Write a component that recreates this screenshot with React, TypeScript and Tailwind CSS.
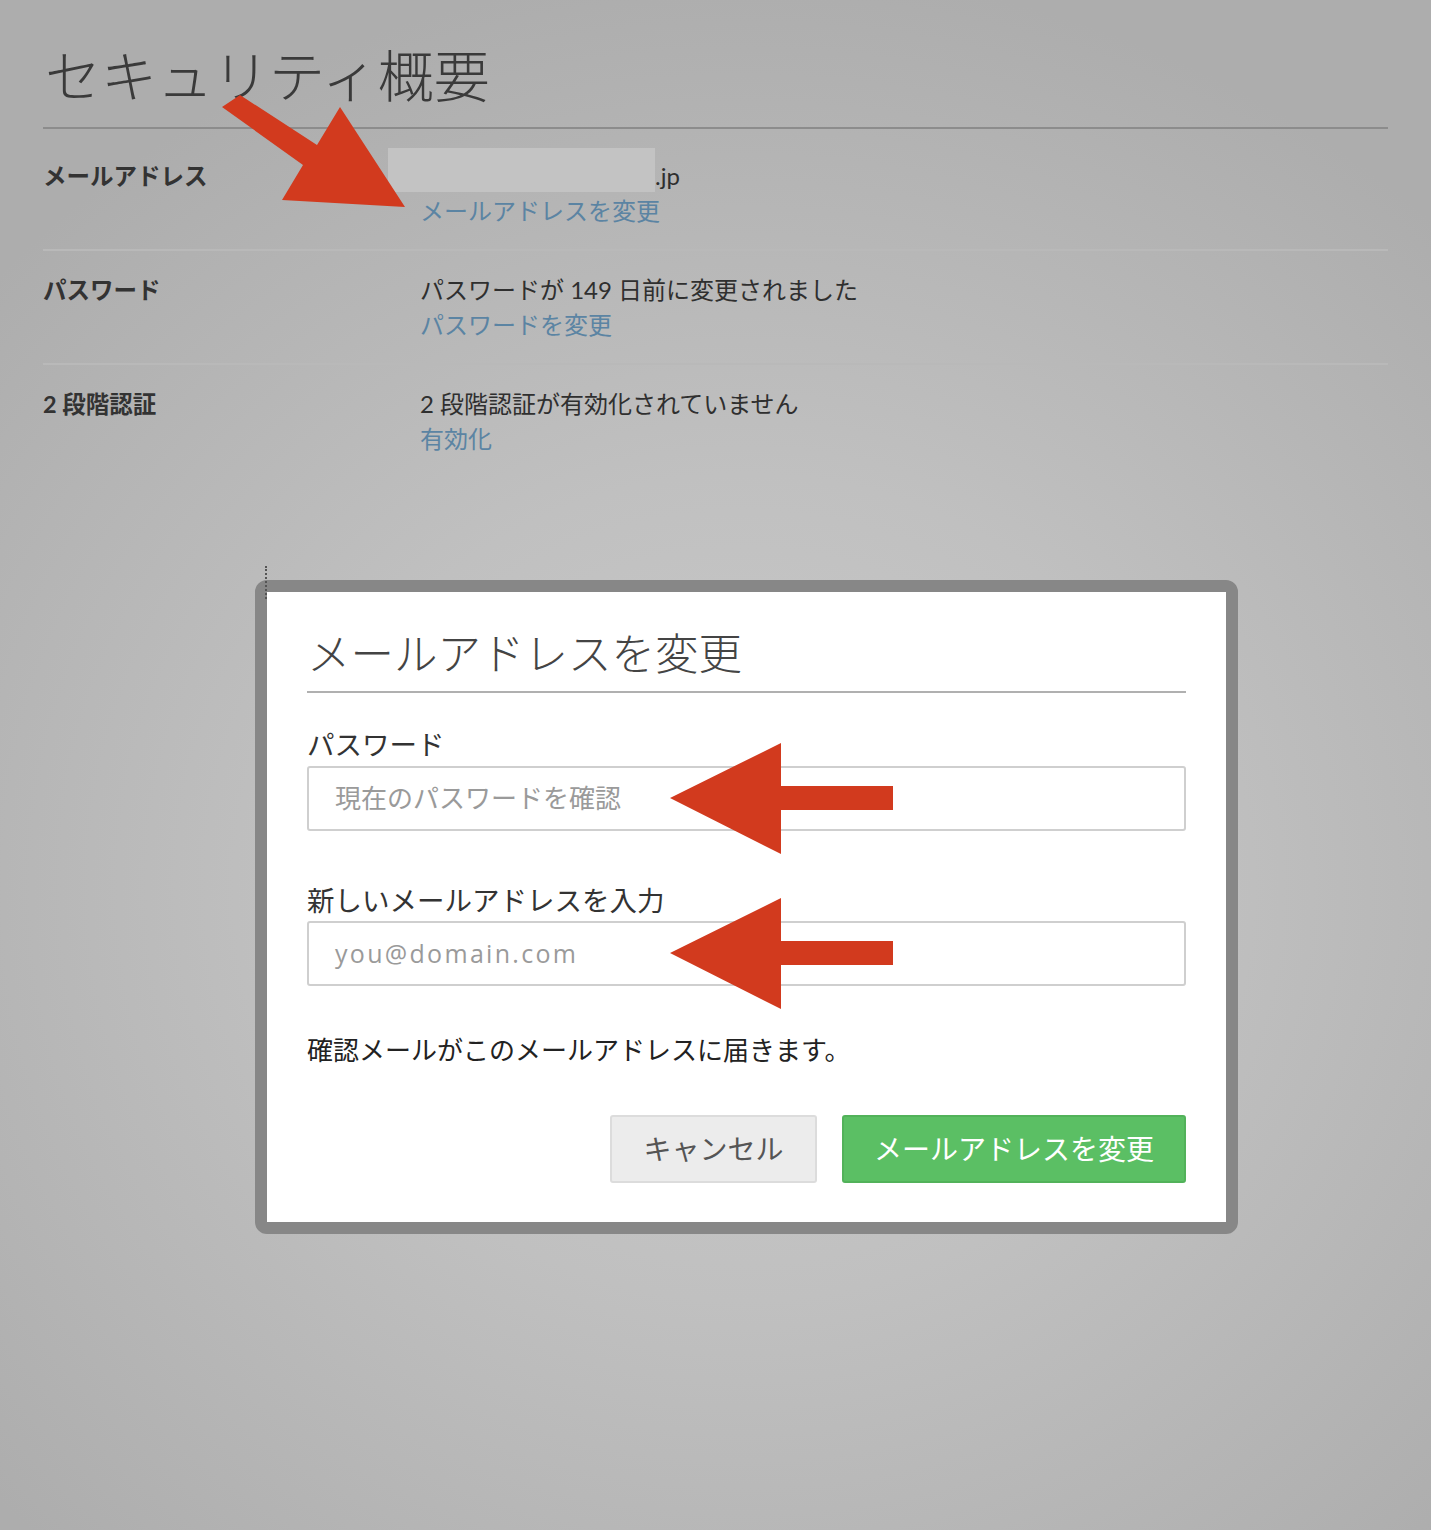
const font = { fontFamily: '"Lato", "Noto Sans CJK JP", sans-serif' }
const latin = { fontFamily: '"Open Sans", "Noto Sans CJK JP", sans-serif' }

function LeftArrow({ className }: { className: string }) {
  return (
    <svg className={className} width="224" height="112" viewBox="0 0 224 112" aria-hidden>
      <polygon points="0,55 111,0 111,43 223,43 223,67 111,67 111,111" fill="#d23a1e" />
    </svg>
  )
}

function DiagonalArrow() {
  return (
    <svg className="pointer-events-none absolute left-[215px] top-[95px]" width="200" height="120" viewBox="0 0 200 120" aria-hidden>
      <polygon points="7,12 25,0 102,50 125,12 190,112 67,105 88,70" fill="#d23a1e" />
    </svg>
  )
}

type Row = { label: string; value: React.ReactNode; link: string }

const rows: Row[] = [
  {
    label: 'メールアドレス',
    value: (
      <span className="relative">
        <span className="absolute -left-[32px] -top-[13px] h-[44px] w-[267px] bg-[#c3c3c3]" />
        <span className="inline-block pl-[235px]">.jp</span>
      </span>
    ),
    link: 'メールアドレスを変更',
  },
  { label: 'パスワード', value: 'パスワードが 149 日前に変更されました', link: 'パスワードを変更' },
  { label: '2 段階認証', value: '2 段階認証が有効化されていません', link: '有効化' },
]

export default function App() {
  return (
    <div
      className="relative h-[1530px] w-full overflow-hidden bg-[radial-gradient(ellipse_70%_60%_at_52%_58%,#cbcbcb_0%,#c0c0c0_45%,#adadad_100%)] text-[#333]"
      style={font}
    >
      <div className="px-[43px] pt-[40px]">
        <h1 className="pl-[2px] text-[56px] font-light leading-[72px] text-[#3a3a3a]">セキュリティ概要</h1>
        <div className="mt-[15px] border-t-2 border-[#8c8c8c]" />
        {rows.map((r, i) => (
          <div
            key={r.label}
            className={`flex pb-[23px] ${i === 0 ? 'pt-[32px]' : 'pt-[24px]'} ${i < rows.length - 1 ? 'border-b-2 border-[#b9b9b9]' : ''}`}
          >
            <div className="w-[377px] text-[23.5px] font-bold leading-[30px] text-[#333]">{r.label}</div>
            <div className="flex flex-col">
              <div className="text-[24px] leading-[30px] text-[#2f2f2f]">{r.value}</div>
              <a className="relative mt-[5px] text-[24px] leading-[30px] text-[#5b84a3]">{r.link}</a>
            </div>
          </div>
        ))}
      </div>

      <DiagonalArrow />

      <div className="relative ml-[255px] mt-[103px] w-[983px]">
        <div className="absolute -top-[14px] left-[10px] h-[33px] border-l-2 border-dotted border-[#555]" />
        <div className="rounded-[12px] border-[12px] border-[#878787] bg-white px-[40px] pb-[39px] pt-[33px]">
          <h2 className="text-[43.5px] font-light leading-[56px] text-[#444]">メールアドレスを変更</h2>
          <div className="mt-[10px] border-t-2 border-[#b0b0b0]" />

          <div className="relative mt-[36px]">
            <label className="block text-[27.5px] leading-[32px] text-[#333]">パスワード</label>
            <div className="mt-[5px] flex h-[65px] items-center rounded-[3px] border-2 border-[#cfcfcf] px-[26px] text-[26px] text-[#9a9a9a]">
              現在のパスワードを確認
            </div>
            <LeftArrow className="pointer-events-none absolute left-[363px] top-[14px]" />
          </div>

          <div className="relative mt-[54px]">
            <label className="block text-[27.5px] leading-[32px] text-[#333]">新しいメールアドレスを入力</label>
            <div
              className="mt-[4px] flex h-[65px] items-center rounded-[3px] border-2 border-[#cfcfcf] px-[26px] text-[25px] tracking-[2.3px] text-[#9a9a9a]"
              style={latin}
            >
              you@domain.com
            </div>
            <LeftArrow className="pointer-events-none absolute left-[363px] top-[13px]" />
          </div>

          <p className="mt-[47px] text-[26px] leading-[34px] text-[#222]">確認メールがこのメールアドレスに届きます。</p>

          <div className="mt-[48px] flex justify-end gap-[25px]">
            <button className="h-[68px] w-[207px] rounded-[3px] border-2 border-[#dcdcdc] bg-[#ececec] text-[28px] text-[#555]">
              キャンセル
            </button>
            <button className="h-[68px] w-[344px] rounded-[3px] border-2 border-[#52b25a] bg-[#5bbf64] text-[28px] text-white">
              メールアドレスを変更
            </button>
          </div>
        </div>
      </div>
    </div>
  )
}
